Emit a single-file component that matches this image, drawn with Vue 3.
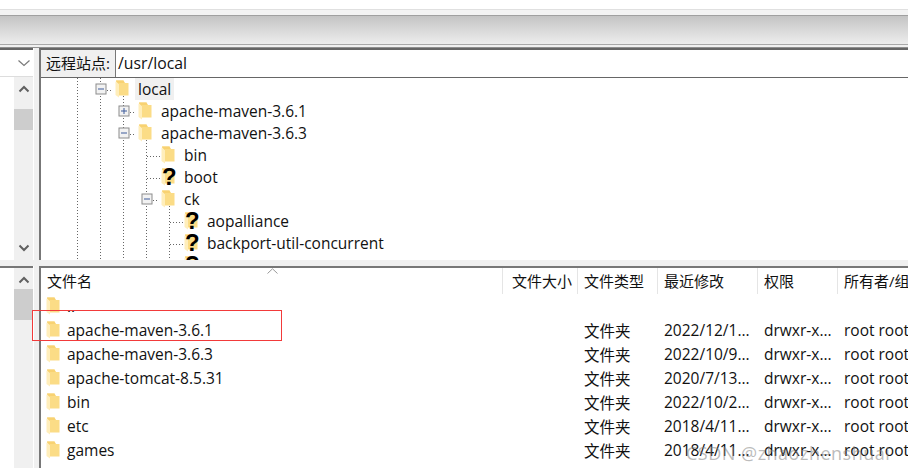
<template>
  <div class="app">
    <svg width="0" height="0" class="defs">
      <symbol id="folder" viewBox="0 0 14 18">
        <path d="M1 0.5 H8.5 L10 3 H13.5 V15.5 H4 V5 L1 2 Z" fill="#fbdc86" />
        <path d="M1 0.5 H8.5 L9.5 3 H3 Z" fill="#f8d272" />
        <path d="M0.5 1.5 L4 5 V17.5 L0.5 15 Z" fill="#ffeebb" />
      </symbol>
    </svg>

    <div class="top-white"></div>
    <div class="toolbar"></div>

    <div class="pane-row upper">
      <div class="left-col">
        <div class="combo">
          <svg width="14" height="8" viewBox="0 0 14 8"><path d="M1.5 1.5 L7 6.5 L12.5 1.5" fill="none" stroke="#7a7a7a" stroke-width="1.2" /></svg>
        </div>
        <div class="scroll-wrap">
          <div class="scrollbar">
            <svg class="arrow" width="12" height="8" viewBox="0 0 12 8"><path d="M1.5 6.5 L6 2 L10.5 6.5" fill="none" stroke="#606060" stroke-width="2" /></svg>
            <div class="thumb thumb-top"></div>
            <svg class="arrow arrow-bottom" width="12" height="8" viewBox="0 0 12 8"><path d="M1.5 1.5 L6 6 L10.5 1.5" fill="none" stroke="#606060" stroke-width="2" /></svg>
          </div>
        </div>
      </div>
      <div class="split-v"></div>
      <div class="main-col">
        <div class="address">
          <div class="addr-label">远程站点:</div>
          <div class="addr-value">/usr/local</div>
        </div>
        <div class="tree">
          <svg class="guides" width="400" height="183">
            <g stroke="#666" stroke-dasharray="1 2" fill="none">
              <path d="M36.5 0 V183" />
              <path d="M59.5 0 V7 M59.5 18 V183" />
              <path d="M82.5 18 V29 M82.5 40 V51 M82.5 62 V183" />
              <path d="M105.5 62 V117 M105.5 128 V183" />
              <path d="M128.5 128 V183" />
              <path d="M66 12.5 H72 M89 34.5 H95 M89 56.5 H95 M106 78.5 H119 M106 100.5 H119 M112 122.5 H118 M129 144.5 H142 M129 166.5 H142" />
            </g>
          </svg>
          <div v-for="node in treeNodes" :key="node.name" class="tree-row" :style="{ paddingLeft: node.depth * 23 + 54 + 'px' }">
            <span class="toggle">
              <svg v-if="node.toggle" width="12" height="12" viewBox="0 0 12 12">
                <rect x="1" y="1" width="10" height="10" fill="#f2f2f2" stroke="#8c8c8c" />
                <path d="M3 6 H9" stroke="#3c5a9a" />
                <path v-if="node.toggle === 'plus'" d="M6 3 V9" stroke="#3c5a9a" />
              </svg>
            </span>
            <span class="tree-icon">
              <svg width="14" height="18"><use href="#folder" /></svg>
              <span v-if="node.unknown" class="question">?</span>
            </span>
            <span class="tree-name" :class="{ current: node.current }">{{ node.name }}</span>
          </div>
        </div>
      </div>
    </div>

    <div class="split-h"></div>

    <div class="pane-row lower">
      <div class="left-col">
        <div class="scroll-wrap">
          <div class="scrollbar">
            <svg class="arrow" width="12" height="8" viewBox="0 0 12 8"><path d="M1.5 6.5 L6 2 L10.5 6.5" fill="none" stroke="#606060" stroke-width="2" /></svg>
            <div class="thumb thumb-low"></div>
          </div>
        </div>
      </div>
      <div class="split-v"></div>
      <div class="main-col list">
        <div class="list-head">
          <div v-for="col in columns" :key="col.title" class="head-cell" :class="{ right: col.right }" :style="{ width: col.width + 'px' }">{{ col.title }}</div>
          <svg class="sort" width="11" height="6" viewBox="0 0 11 6"><path d="M0.5 5.5 L5.5 0.8 L10.5 5.5" fill="none" stroke="#9a9a9a" /></svg>
        </div>
        <div v-for="file in files" :key="file.name" class="list-row">
          <div class="cell name-cell" :style="{ width: columns[0].width + 'px' }">
            <svg width="14" height="18"><use href="#folder" /></svg>
            <span class="file-name">{{ file.name }}</span>
          </div>
          <div class="cell" :style="{ width: columns[1].width + 'px' }"></div>
          <div class="cell" :style="{ width: columns[2].width + 'px' }">{{ file.type }}</div>
          <div class="cell" :style="{ width: columns[3].width + 'px' }">{{ file.date }}</div>
          <div class="cell" :style="{ width: columns[4].width + 'px' }">{{ file.perm }}</div>
          <div class="cell" :style="{ width: columns[5].width + 'px' }">{{ file.owner }}</div>
        </div>
      </div>
    </div>

    <div class="red-box"></div>
    <div class="watermark">CSDN @zhaozhenshuai</div>
  </div>
</template>

<script setup>
const treeNodes = [
  { name: 'local', depth: 0, toggle: 'minus', current: true },
  { name: 'apache-maven-3.6.1', depth: 1, toggle: 'plus' },
  { name: 'apache-maven-3.6.3', depth: 1, toggle: 'minus' },
  { name: 'bin', depth: 2 },
  { name: 'boot', depth: 2, unknown: true },
  { name: 'ck', depth: 2, toggle: 'minus' },
  { name: 'aopalliance', depth: 3, unknown: true },
  { name: 'backport-util-concurrent', depth: 3, unknown: true },
  { name: 'c', depth: 3, unknown: true }
]

const columns = [
  { title: '文件名', width: 462 },
  { title: '文件大小', width: 75, right: true },
  { title: '文件类型', width: 80 },
  { title: '最近修改', width: 100 },
  { title: '权限', width: 80 },
  { title: '所有者/组', width: 100 }
]

const files = [
  { name: '..' },
  { name: 'apache-maven-3.6.1', type: '文件夹', date: '2022/12/1...', perm: 'drwxr-x...', owner: 'root root' },
  { name: 'apache-maven-3.6.3', type: '文件夹', date: '2022/10/9...', perm: 'drwxr-x...', owner: 'root root' },
  { name: 'apache-tomcat-8.5.31', type: '文件夹', date: '2020/7/13...', perm: 'drwxr-x...', owner: 'root root' },
  { name: 'bin', type: '文件夹', date: '2022/10/2...', perm: 'drwxr-x...', owner: 'root root' },
  { name: 'etc', type: '文件夹', date: '2018/4/11...', perm: 'drwxr-x...', owner: 'root root' },
  { name: 'games', type: '文件夹', date: '2018/4/11...', perm: 'drwxr-x...', owner: 'root root' }
]
</script>

<style>
html,
body {
  margin: 0;
  overflow: hidden;
  background: #fff;
}
</style>

<style scoped>
.app {
  position: relative;
  width: 908px;
  height: 468px;
  overflow: hidden;
  background: #fff;
  color: #111;
  font-family: "Open Sans", "Noto Sans CJK SC", sans-serif;
  font-size: 15.5px;
}

.defs {
  position: absolute;
}

.top-white {
  height: 9px;
  background: #fff;
  border-bottom: 1px solid #e0e0e0;
}

.toolbar {
  height: 38px;
  background: linear-gradient(#f3f3f3 0 5px, #a0a0a0 5px 6px, #c4c4c4 6px, #ededed 34px, #a8a8a8 34px 35px, #f0f0f0 35px 37px, #909090 37px 38px);
}

.pane-row {
  display: flex;
}

.upper {
  height: 212px;
}

.lower {
  height: 202px;
}

.left-col {
  width: 33px;
  flex: none;
  display: flex;
  flex-direction: column;
  box-sizing: border-box;
}

.upper .left-col,
.upper .main-col {
  border-top: 2px solid #666;
}

.lower .left-col,
.lower .main-col {
  border-top: 2px solid #777;
}

.split-v {
  width: 6px;
  flex: none;
  background: #f0f0f0;
  border-left: 1px solid #fff;
  box-sizing: border-box;
}

.main-col {
  flex: 1;
  min-width: 0;
  border-left: 2px solid #777;
  display: flex;
  flex-direction: column;
  box-sizing: border-box;
}

.combo {
  height: 26px;
  flex: none;
  display: flex;
  align-items: center;
  justify-content: flex-end;
  padding-right: 2px;
  border-bottom: 1px solid #ddd;
}

.scroll-wrap {
  flex: 1;
  display: flex;
  justify-content: flex-end;
  min-height: 0;
}

.scrollbar {
  width: 19px;
  background: #f0f0f0;
  display: flex;
  flex-direction: column;
  align-items: center;
  padding-top: 8px;
  box-sizing: border-box;
}

.arrow {
  flex: none;
}

.arrow-bottom {
  margin-top: auto;
  margin-bottom: 8px;
}

.thumb {
  width: 19px;
  background: #cdcdcd;
  flex: none;
}

.thumb-top {
  height: 21px;
  margin-top: 16px;
}

.thumb-low {
  height: 31px;
  margin-top: 5px;
}

.address {
  height: 27px;
  flex: none;
  display: flex;
  align-items: center;
  border-bottom: 1px solid #666;
}

.addr-label {
  height: 27px;
  width: 75px;
  box-sizing: border-box;
  background: #f0f0f0;
  border-right: 1px solid #777;
  display: flex;
  align-items: center;
  padding: 0 0 2px 5px;
  font-size: 15px;
}

.addr-value {
  padding-left: 2px;
  position: relative;
  top: -1px;
  font-size: 15.8px;
}

.tree {
  position: relative;
  flex: 1;
  overflow: hidden;
}

.guides {
  position: absolute;
  left: 0;
  top: 0;
}

.tree-row {
  position: relative;
  display: flex;
  align-items: center;
  height: 22px;
}

.toggle {
  width: 20px;
  flex: none;
  display: flex;
  align-items: center;
}

.tree-icon {
  position: relative;
  display: flex;
  width: 14px;
  height: 18px;
  flex: none;
}

.question {
  position: absolute;
  left: 1px;
  top: -4px;
  width: 14px;
  text-align: center;
  font: bold 24px/26px "Liberation Sans", sans-serif;
  color: #000;
}

.tree-name {
  margin-left: 6px;
  padding: 0 3px;
  line-height: 22px;
}

.current {
  background: #f0f0f0;
}

.split-h {
  height: 6px;
  background: #f0f0f0;
}

.list-head {
  position: relative;
  display: flex;
  height: 26px;
  flex: none;
}

.head-cell {
  flex: none;
  box-sizing: border-box;
  padding-left: 6px;
  line-height: 26px;
  border-right: 1px solid #e5e5e5;
  font-size: 15px;
  white-space: nowrap;
  overflow: hidden;
}

.right {
  text-align: right;
  padding: 0 5px 0 0;
}

.sort {
  position: absolute;
  left: 226px;
  top: 0;
}

.list-row {
  display: flex;
  height: 24px;
  flex: none;
  align-items: center;
}

.cell {
  flex: none;
  box-sizing: border-box;
  padding-left: 6px;
  white-space: nowrap;
  overflow: hidden;
}

.name-cell {
  display: flex;
  align-items: center;
  gap: 7px;
  padding-left: 5px;
}

.red-box {
  position: absolute;
  left: 32px;
  top: 310px;
  width: 248px;
  height: 29px;
  border: 1px solid #f23a3a;
}

.watermark {
  position: absolute;
  left: 686px;
  top: 441px;
  font-size: 18px;
  letter-spacing: 0.5px;
  color: rgba(130, 130, 130, 0.55);
  white-space: nowrap;
}
</style>
